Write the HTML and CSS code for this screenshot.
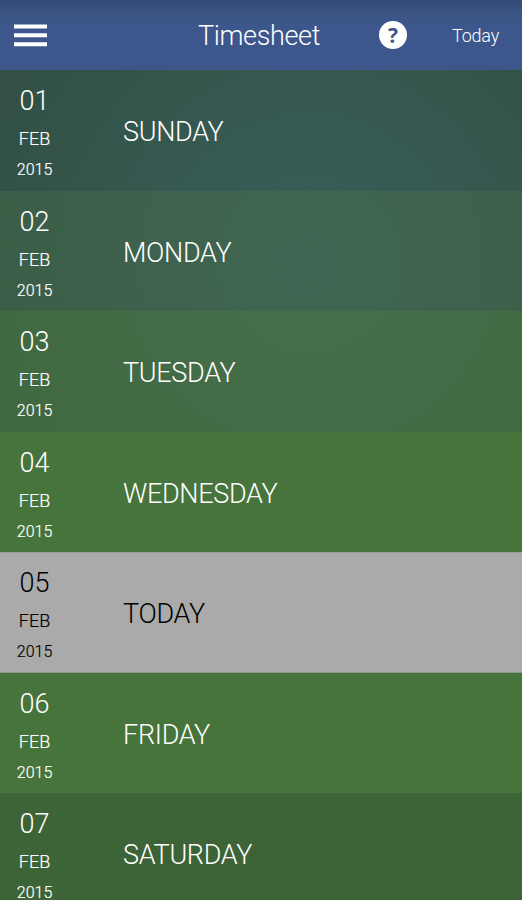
FILE: index.html
```html
<!DOCTYPE html>
<html lang="en"><head><meta charset="utf-8"><title>Timesheet</title><link rel="stylesheet" href="styles.css"></head>
<body>
<header class="bar">
<button class="menu" aria-label="Menu"><svg width="33" height="24" viewBox="0 0 33 24"><path d="M0 3.5h33M0 12.3h33M0 21.2h33" stroke="#fff" stroke-width="4"/></svg></button>
<h1 class="title">Timesheet</h1>
<span class="help">?</span>
<a class="today-link">Today</a>
</header>
<main class="days">
<section class="day d1"><div class="date"><b>01</b><span class="month">FEB</span><span class="year">2015</span></div><h2>SUNDAY</h2></section>
<section class="day d2"><div class="date"><b>02</b><span class="month">FEB</span><span class="year">2015</span></div><h2>MONDAY</h2></section>
<section class="day d3"><div class="date"><b>03</b><span class="month">FEB</span><span class="year">2015</span></div><h2>TUESDAY</h2></section>
<section class="day d4"><div class="date"><b>04</b><span class="month">FEB</span><span class="year">2015</span></div><h2>WEDNESDAY</h2></section>
<section class="day current"><div class="date"><b>05</b><span class="month">FEB</span><span class="year">2015</span></div><h2>TODAY</h2></section>
<section class="day d6"><div class="date"><b>06</b><span class="month">FEB</span><span class="year">2015</span></div><h2>FRIDAY</h2></section>
<section class="day d7"><div class="date"><b>07</b><span class="month">FEB</span><span class="year">2015</span></div><h2>SATURDAY</h2></section>
</main>
</body></html>
```
FILE: styles.css
```css
*{box-sizing:border-box}
body{margin:0;width:522px;height:900px;overflow:hidden;font-family:Roboto,sans-serif;font-weight:300;color:#fff}
.bar{display:flex;align-items:center;height:70px;background:linear-gradient(#334b75,#3b5585 14px,#3d568c 22px)}
.menu{border:0;background:none;padding:0;margin-left:14px;width:33px;height:24px}
.menu svg{display:block}
.title{margin:2px 0 0 151px;width:181px;font-size:27px;letter-spacing:-.35px;font-weight:300;line-height:32px}
.help{width:28px;height:28px;border-radius:50%;background:#fff;color:#3d568c;font:bold 21px/28px "Open Sans",sans-serif;text-align:center}
.today-link{margin:1px 0 0 45px;font-size:18px;letter-spacing:-.2px}
.day{display:flex;height:120.5px}
.date{display:flex;flex-direction:column;align-items:center;width:69px;padding-top:14px}
.date b{font-size:27px;font-weight:300;line-height:34px}
.month{font-size:18px;line-height:22px;margin-top:10px;-webkit-text-stroke:.2px}
.year{font-size:16px;line-height:20px;margin-top:10px;-webkit-text-stroke:.2px}
h2{margin:45px 0 0 54px;font-size:27px;letter-spacing:-.3px;font-weight:300;line-height:34px}
.d1{background:radial-gradient(circle at 310px 193px,#385d57 60px,#325044 360px)}
.d2{background:radial-gradient(circle at 310px 73px,#406653,#3b5d46 340px)}
.d3{background:radial-gradient(circle at 310px -48px,#456f4c,#416940 340px)}
.d4{background:radial-gradient(circle at 310px -168px,#48753f 160px,#46743b 400px)}
.current{background:#aaa;color:#000;border-top:1px solid #999f98;border-bottom:1px solid #8b9489}
.current .date{padding-top:13px}
.current h2{margin-top:44px}
.d6{background:#46743a}
.d7{background:#3c6437}
```
